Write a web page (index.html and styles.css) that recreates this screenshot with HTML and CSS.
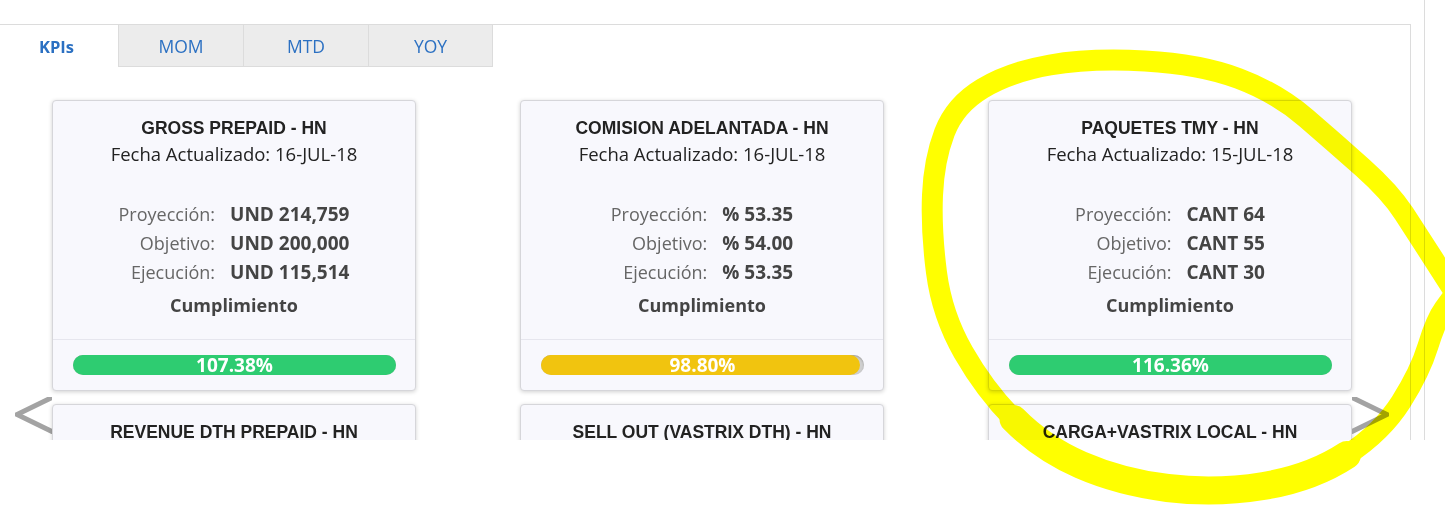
FILE: index.html
```html
<!DOCTYPE html>
<html lang="es">
<head>
<meta charset="utf-8">
<title>KPIs</title>
<link rel="stylesheet" href="styles.css">
</head>
<body>
<div class="frame">
  <div class="panel">
    <div class="tabs">
      <div class="tab active">KPIs</div>
      <div class="tab">MOM</div>
      <div class="tab">MTD</div>
      <div class="tab last">YOY</div>
    </div>
    <div class="carousel">
      <div class="arrow-col left">
        <svg class="arrow" width="37" height="37" viewBox="0 0 37 37"><polyline points="40,-1 2,17.5 40,36" /></svg>
      </div>
      <div class="cards">
        <div class="card">
          <div class="card-body">
            <div class="title">GROSS PREPAID - HN</div>
            <div class="date">Fecha Actualizado: 16-JUL-18</div>
            <div class="metrics">
              <span class="lbl">Proyección:</span><span class="val">UND 214,759</span>
              <span class="lbl">Objetivo:</span><span class="val">UND 200,000</span>
              <span class="lbl">Ejecución:</span><span class="val">UND 115,514</span>
            </div>
            <div class="cump">Cumplimiento</div>
          </div>
          <div class="card-foot">
            <div class="bar"><div class="fill green" style="width:100%"></div><span class="pct">107.38%</span></div>
          </div>
        </div>
        <div class="card">
          <div class="card-body">
            <div class="title">COMISION ADELANTADA - HN</div>
            <div class="date">Fecha Actualizado: 16-JUL-18</div>
            <div class="metrics">
              <span class="lbl">Proyección:</span><span class="val">% 53.35</span>
              <span class="lbl">Objetivo:</span><span class="val">% 54.00</span>
              <span class="lbl">Ejecución:</span><span class="val">% 53.35</span>
            </div>
            <div class="cump">Cumplimiento</div>
          </div>
          <div class="card-foot">
            <div class="bar"><div class="fill yellow" style="width:98.8%"></div><span class="pct">98.80%</span></div>
          </div>
        </div>
        <div class="card">
          <div class="card-body">
            <div class="title">PAQUETES TMY - HN</div>
            <div class="date">Fecha Actualizado: 15-JUL-18</div>
            <div class="metrics">
              <span class="lbl">Proyección:</span><span class="val">CANT 64</span>
              <span class="lbl">Objetivo:</span><span class="val">CANT 55</span>
              <span class="lbl">Ejecución:</span><span class="val">CANT 30</span>
            </div>
            <div class="cump">Cumplimiento</div>
          </div>
          <div class="card-foot">
            <div class="bar"><div class="fill green" style="width:100%"></div><span class="pct">116.36%</span></div>
          </div>
        </div>
        <div class="card short">
          <div class="card-body">
            <div class="title">REVENUE DTH PREPAID - HN</div>
          </div>
        </div>
        <div class="card short">
          <div class="card-body">
            <div class="title">SELL OUT (VASTRIX DTH) - HN</div>
          </div>
        </div>
        <div class="card short">
          <div class="card-body">
            <div class="title">CARGA+VASTRIX LOCAL - HN</div>
          </div>
        </div>
      </div>
      <div class="arrow-col right">
        <svg class="arrow" width="37" height="37" viewBox="0 0 37 37"><polyline points="-3,-1 35,17.5 -3,36" /></svg>
      </div>
    </div>
  </div>
</div>
<svg class="marker" width="1445" height="506" viewBox="0 0 1445 506">
  <path d="M1452 288 L1435 261.5 Q1418 235 1404 213.5 Q1390 192 1362.5 167.5 Q1335 143 1306 118 Q1277 93 1238.5 78.5 Q1200 64 1145 61 Q1090 58 1050 65 Q1010 72 982.5 88.5 Q955 105 944.5 132.5 Q934 160 932.5 195 Q931 230 936.5 272.5 Q942 315 963.5 352.5 Q985 390 1013.5 419 Q1042 448 1081 465 Q1120 482 1167.5 488 Q1215 494 1263.5 486 Q1312 478 1347 455 Q1382 432 1401 402 Q1420 372 1428 346 Q1436 320 1444 309 L1452 298"/>
  <path class="thick" d="M1013.5 419 Q1042 448 1081 465 Q1120 482 1167.5 488 Q1215 494 1263.5 486 Q1312 478 1347 455"/>
</svg>
</body>
</html>
```
FILE: styles.css
```css
html, body {
  margin: 0;
  padding: 0;
  background: #fff;
}
body {
  font-family: "Open Sans", "Noto Sans", sans-serif;
  color: #222;
  position: relative;
  width: 1445px;
  height: 506px;
  overflow: hidden;
}
.frame {
  width: 1424px;
  height: 440px;
  border-right: 1px solid #dcdcdc;
  overflow: hidden;
}
.panel {
  margin-top: 24px;
  width: 1410px;
  height: 600px;
  border-top: 1px solid #dcdcdc;
  border-right: 1px solid #dcdcdc;
}
.tabs {
  display: flex;
  height: 42px;
}
.tab {
  box-sizing: border-box;
  width: 125px;
  height: 42px;
  display: flex;
  align-items: center;
  justify-content: center;
  background: #ececec;
  border-left: 1px solid #dcdcdc;
  border-bottom: 1px solid #dcdcdc;
  color: #2b70c2;
  font-size: 17.5px;
  padding-top: 1px;
}
.tab.last {
  border-right: 1px solid #dcdcdc;
}
.tab.active {
  width: 118px;
  background: #fff;
  border: none;
  font-weight: 700;
  font-size: 16.5px;
  justify-content: flex-start;
  padding-left: 39px;
}
.carousel {
  display: flex;
  padding-top: 33px;
}
.arrow-col {
  width: 52px;
  flex: none;
}
.arrow-col.left {
  display: flex;
  justify-content: flex-end;
}
.arrow {
  display: block;
  margin-top: 297px;
  overflow: hidden;
}
.arrow polyline {
  fill: none;
  stroke: #a3a3a3;
  stroke-width: 5;
  stroke-linejoin: miter;
}
.cards {
  display: grid;
  grid-template-columns: repeat(3, 364px);
  column-gap: 104px;
  row-gap: 13px;
}
.card {
  box-sizing: border-box;
  background: #f8f8fd;
  border: 1px solid #d6d6da;
  border-radius: 4px;
  box-shadow: 0 1px 4px rgba(0, 0, 0, 0.18);
}
.card.short {
  height: 120px;
}
.card-body {
  padding: 15px 6px 19px;
  text-align: center;
}
.title {
  font-family: "Liberation Sans", Arial, sans-serif;
  font-weight: 700;
  font-size: 17.5px;
  line-height: 25px;
  color: #222;
}
.date {
  font-size: 18.5px;
  line-height: 25px;
  color: #222;
}
.metrics {
  margin-top: 34px;
  display: grid;
  grid-template-columns: auto auto;
  justify-content: center;
  column-gap: 15px;
  line-height: 29px;
}
.lbl {
  text-align: right;
  color: #666;
  font-size: 18px;
}
.val {
  text-align: left;
  font-weight: 700;
  color: #444;
  font-size: 19px;
}
.cump {
  margin-top: 4px;
  font-size: 18px;
  line-height: 29px;
  font-weight: 700;
  color: #444;
}
.card-foot {
  border-top: 1px solid #e6e6ee;
  padding: 15px 19px 15px 20px;
}
.bar {
  position: relative;
  height: 20px;
  border-radius: 10px;
  background: #cfcfcf;
  box-shadow: inset 0 1px 2px rgba(0, 0, 0, 0.25);
}
.fill {
  height: 100%;
  border-radius: 10px;
}
.fill.green { background: #2ecc71; }
.fill.yellow { background: #f1c40f; }
.pct {
  position: absolute;
  left: 0;
  right: 0;
  top: 0;
  text-align: center;
  color: #fff;
  font-weight: 700;
  font-size: 19px;
  line-height: 21px;
}
.marker {
  position: absolute;
  left: 0;
  top: 0;
  pointer-events: none;
  mix-blend-mode: multiply;
}
.marker path {
  fill: none;
  stroke: #ffff00;
  stroke-width: 21;
  stroke-linecap: round;
  stroke-linejoin: round;
}
.marker path.thick {
  stroke-width: 28;
}
```
